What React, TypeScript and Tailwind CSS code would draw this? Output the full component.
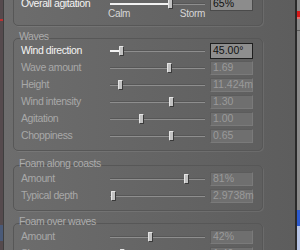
import React from 'react';

type RowData = {
  label: string;
  pos: number;
  value: string;
  active?: boolean;
  focus?: boolean;
};

const Slider = ({ pos, active }: { pos: number; active?: boolean }) => (
  <div className="relative w-[95px] h-[10px] flex items-center shrink-0">
    <div className="w-full h-[2px] bg-[#8e8e8e] border-t border-[#575757]" />
    {active && <div className="absolute left-0 top-[4px] h-[2px] bg-[#f2f2f2]" style={{ width: pos }} />}
    <div
      className="absolute top-0 w-[5px] h-[10px] rounded-[1px] bg-[#c2c2c2] border border-[#3a3a3a] border-l-[#e6e6e6] border-t-[#e6e6e6]"
      style={{ left: pos - 2 }}
    />
  </div>
);

const Value = ({ text, active, focus }: { text: string; active?: boolean; focus?: boolean }) => {
  const cls = focus
    ? 'h-[16px] bg-[#8e8e8e] border border-[#1e1e1e] text-[#111]'
    : active
      ? 'h-[14px] bg-[#8c8c8c] border border-[#4a4a4a] text-[#111]'
      : 'h-[14px] bg-[#6f6f6f] border border-[#5c5c5c] border-b-[#7a7a7a] border-r-[#7a7a7a] text-[#9a9a9a]';
  return (
    <div className={`ml-[5px] w-[43px] flex items-center pl-[2px] text-[10.5px] leading-none ${cls}`}>
      {text}
    </div>
  );
};

const Row = ({ label, pos, value, active, focus }: RowData) => (
  <div className="flex items-center h-[17px] pl-[7px]">
    <span
      className={`w-[89px] shrink-0 text-[10.5px] leading-none tracking-[-0.4px] whitespace-nowrap ${
        active ? 'text-[#f4f4f4]' : 'text-[#a8a8a8]'
      }`}
    >
      {label}
    </span>
    <Slider pos={pos} active={active} />
    <Value text={value} active={active} focus={focus} />
  </div>
);

const Section = ({ title, rows, className }: { title: string; rows: RowData[]; className: string }) => (
  <div className={className}>
    <div className="relative z-10 h-[10px] pl-[15px] text-[10.5px] leading-[10px] tracking-[-0.4px] text-[#acacac]">
      {title}
    </div>
    <div className="-mt-[3px] ml-[9px] w-[250px] pt-[4px] pb-[6px] rounded-[5px] border border-[#575757] shadow-[1px_1px_0_rgba(255,255,255,0.08)]">
      {rows.map((r) => (
        <Row key={r.label + r.value} {...r} />
      ))}
    </div>
  </div>
);

const waves: RowData[] = [
  { label: 'Wind direction', pos: 11, value: '45.00°', active: true, focus: true },
  { label: 'Wave amount', pos: 59, value: '1.69' },
  { label: 'Height', pos: 10, value: '11.424m' },
  { label: 'Wind intensity', pos: 61, value: '1.30' },
  { label: 'Agitation', pos: 31, value: '1.00' },
  { label: 'Choppiness', pos: 61, value: '0.65' },
];

const coasts: RowData[] = [
  { label: 'Amount', pos: 76, value: '81%' },
  { label: 'Typical depth', pos: 3, value: '2.9738m' },
];

const foamWaves: RowData[] = [
  { label: 'Amount', pos: 40, value: '42%' },
  { label: 'Size', pos: 12, value: '1.40' },
];

export default function App() {
  return (
    <div className="w-[300px] h-[250px] overflow-hidden flex font-['Liberation_Sans',Arial,sans-serif]">
      <div className="w-[3px] flex flex-col bg-[#554a4d] border-r border-[#3e3e3e] box-content">
        <div className="mt-[19px] h-[2px] bg-[#c03030]" />
        <div className="mt-[204px] h-[16px] bg-[#4a5a78]" />
      </div>

      <div className="flex-1 flex flex-col overflow-hidden bg-gradient-to-r from-[#6d6d6d] to-[#5d5d5d]">
        <div className="-mt-[13px] ml-[9px] w-[250px] pt-[7px] pb-[6px] rounded-[5px] border border-[#575757] shadow-[1px_1px_0_rgba(255,255,255,0.08)]">
          <Row label="Overall agitation" pos={60} value="65%" active />
          <div className="-mt-[3px] h-[10px] ml-[94px] w-[97px] flex justify-between text-[10px] leading-[10px] tracking-[-0.3px] text-[#d6d6d6]">
            <span>Calm</span>
            <span>Storm</span>
          </div>
        </div>
        <Section title="Waves" rows={waves} className="mt-[5px] [&>div:last-child]:pt-[3px]" />
        <Section title="Foam along coasts" rows={coasts} className="mt-[7px]" />
        <Section title="Foam over waves" rows={foamWaves} className="mt-[5px]" />
      </div>

      <div className="w-[2px] bg-[#2a2a2a]" />
      <div className="w-[3px] flex flex-col bg-[#8a8a8a]">
        <div className="mt-[11px] h-[6px] bg-[#d81818]" />
        <div className="h-[2px] bg-[#e07070]" />
        <div className="mt-[11px] h-[1px] bg-[#5a5a5a]" />
        <div className="mt-[179px] h-[16px] bg-[#2d5bd0]" />
        <div className="flex-1 bg-[#b8c6e8]" />
      </div>
    </div>
  );
}
